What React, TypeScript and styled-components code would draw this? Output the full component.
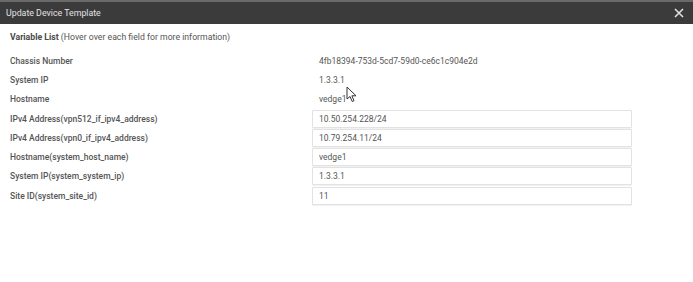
import React from 'react';
import styled, { createGlobalStyle } from 'styled-components';

const GlobalStyle = createGlobalStyle`
  html, body {
    margin: 0;
    padding: 0;
    background: #ffffff;
  }
  body {
    font-family: Roboto, "Liberation Sans", Arial, sans-serif;
    -webkit-font-smoothing: antialiased;
  }
`;

const Modal = styled.div`
  width: 693px;
  height: 282px;
  background: #fff;
  display: flex;
  flex-direction: column;
  position: relative;
  overflow: hidden;
`;

const Header = styled.div`
  height: 22px;
  border-top: 2px solid #6a6a6a;
  background: #3b3b3c;
  display: flex;
  align-items: center;
  justify-content: space-between;
  padding: 0 8px 0 6px;
  color: #e2e2e2;
  font-size: 8.8px;
`;

const CloseButton = styled.button`
  border: 0;
  background: none;
  padding: 0;
  width: 12px;
  height: 12px;
  display: flex;
  align-items: center;
  justify-content: center;
  cursor: pointer;
`;

const Body = styled.div`
  padding: 6px 10px 0 10px;
  color: #555;
`;

const SectionTitle = styled.div`
  font-size: 8.7px;
  color: #555;
  height: 14px;
  line-height: 14px;
  margin-bottom: 7px;

  b {
    font-weight: 700;
    color: #4a4a4a;
  }
`;

const Grid = styled.div`
  display: grid;
  grid-template-columns: 302px 320px;
  grid-auto-rows: 19.3px;
  align-items: center;
`;

const Label = styled.div`
  font-size: 8.5px;
  font-weight: 500;
  color: #555;
  white-space: nowrap;
`;

const StaticValue = styled.div`
  font-size: 8.5px;
  color: #555;
  padding-left: 7px;
`;

const Field = styled.input`
  box-sizing: border-box;
  width: 320px;
  height: 18px;
  border: 1px solid #e2e2e2;
  box-shadow: 0 1px 1px rgba(0, 0, 0, 0.06);
  border-radius: 1px;
  padding: 0 6px;
  font-family: Roboto, "Liberation Sans", Arial, sans-serif;
  font-size: 8.5px;
  color: #555;
  outline: none;
  background: #fff;
`;

const Pointer = styled.svg`
  position: absolute;
  left: 346px;
  top: 86px;
`;

type Row = { label: string; value: string; editable?: boolean };

const rows: Row[] = [
  { label: 'Chassis Number', value: '4fb18394-753d-5cd7-59d0-ce6c1c904e2d' },
  { label: 'System IP', value: '1.3.3.1' },
  { label: 'Hostname', value: 'vedge1' },
  { label: 'IPv4 Address(vpn512_if_ipv4_address)', value: '10.50.254.228/24', editable: true },
  { label: 'IPv4 Address(vpn0_if_ipv4_address)', value: '10.79.254.11/24', editable: true },
  { label: 'Hostname(system_host_name)', value: 'vedge1', editable: true },
  { label: 'System IP(system_system_ip)', value: '1.3.3.1', editable: true },
  { label: 'Site ID(system_site_id)', value: '11', editable: true },
];

export default function App() {
  return (
    <>
      <GlobalStyle />
      <Modal>
        <Header>
          <span>Update Device Template</span>
          <CloseButton aria-label="Close">
            <svg width="10" height="10" viewBox="0 0 10 10">
              <path d="M1 1 L9 9 M9 1 L1 9" stroke="#e0e0e0" strokeWidth="1.6" />
            </svg>
          </CloseButton>
        </Header>
        <Body>
          <SectionTitle>
            <b>Variable List</b> (Hover over each field for more information)
          </SectionTitle>
          <Grid>
            {rows.map((r) => (
              <React.Fragment key={r.label}>
                <Label>{r.label}</Label>
                {r.editable ? (
                  <Field defaultValue={r.value} />
                ) : (
                  <StaticValue>{r.value}</StaticValue>
                )}
              </React.Fragment>
            ))}
          </Grid>
        </Body>
        <Pointer width="12" height="17" viewBox="0 0 12 17">
          <path d="M1 1 L1 13 L4 10.5 L6.2 15.5 L8 14.7 L5.9 9.8 L10 9.8 Z" fill="#fff" stroke="#333" strokeWidth="1" strokeLinejoin="round" />
        </Pointer>
      </Modal>
    </>
  );
}
